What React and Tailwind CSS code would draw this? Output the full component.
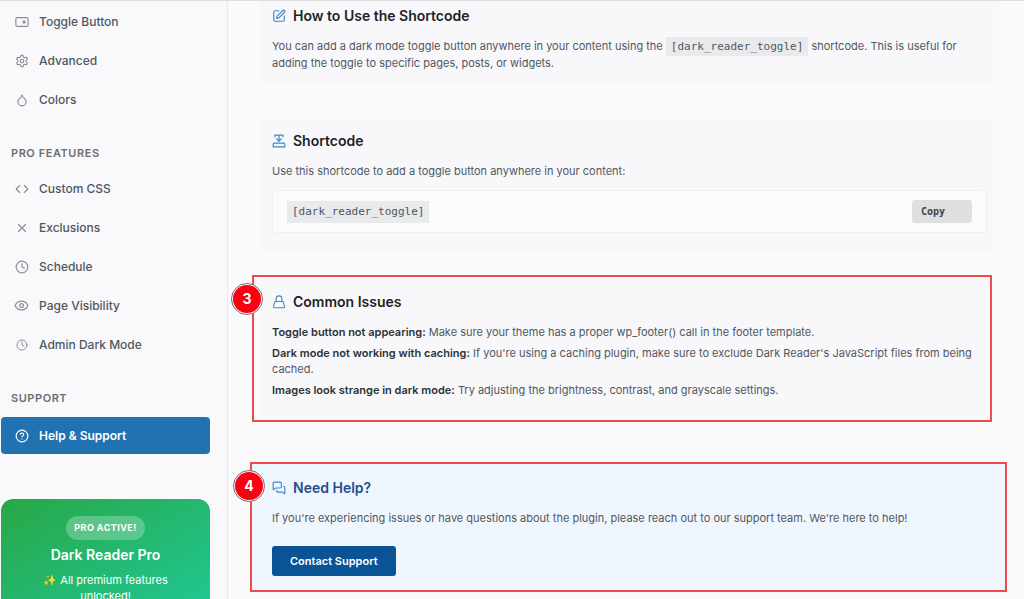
import React from "react";
import { Settings, Droplet, Code, X, Clock, Eye, CircleHelp, SquarePen, MessagesSquare } from "lucide-react";

function ToggleIcon() {
  return (
    <svg viewBox="0 0 24 24" className="h-[14px] w-[14px]" fill="none" stroke="currentColor" strokeWidth="2" aria-hidden="true">
      <rect x="1.500" y="4.500" width="21" height="15" rx="2.5" />
      <circle cx="15.5" cy="12" r="1.8" fill="currentColor" />
    </svg>
  );
}

function ShortcodeIcon() {
  return (
    <svg viewBox="0 0 24 24" className="h-[14px] w-[14px]" fill="none" stroke="currentColor" strokeWidth="2" strokeLinecap="round" strokeLinejoin="round" aria-hidden="true">
      <path d="M5 5V2h14v3M12 2v10M8 8.500l4 4 4-4" />
      <path d="M4 15.500h16a2 2 0 0 1 2 2V22H2v-4.500a2 2 0 0 1 2-2z" />
    </svg>
  );
}

function LockIcon() {
  return (
    <svg viewBox="0 0 24 24" className="h-[14px] w-[14px]" fill="none" stroke="currentColor" strokeWidth="1.800" strokeLinejoin="round" aria-hidden="true">
      <path d="M7 11V6.500a5 5 0 0 1 10 0V11" />
      <path d="M5 11h14l2.500 9a2 2 0 0 1-2 2h-15a2 2 0 0 1-2-2z" />
    </svg>
  );
}

const icon = "h-[14px] w-[14px]";

function NavItem({ children, label, active }) {
  return (
    <li>
      <a
        href="#"
        aria-current={active ? "page" : undefined}
        className={
          active
            ? "flex h-[37px] items-center gap-[10px] rounded bg-[#2271b1] px-[13px] text-xs font-semibold text-white"
            : "flex h-[37px] items-center gap-[10px] rounded px-[13px] text-xs font-medium text-[#50575e]"
        }
      >
        <span className={active ? "flex w-[15px] justify-center text-white" : "flex w-[15px] justify-center text-[#8b8f94]"}>{children}</span>
        {label}
      </a>
    </li>
  );
}

function NavHeading({ children }) {
  return <h2 className="px-[10px] text-[11px] leading-4 font-semibold tracking-wider text-[#6b6f74]">{children}</h2>;
}

function CardTitle({ icon, children, className = "text-[#1d2327]" }) {
  return (
    <h3 className={"flex items-center gap-[6px] text-sm leading-5 font-semibold " + className}>
      <span className="flex w-[15px] text-[#3f87c6]">{icon}</span>
      {children}
    </h3>
  );
}

function Shortcode() {
  return <code className="bg-[#e9eaeb] px-[5px] py-[3px] font-['DejaVu_Sans_Mono',monospace] text-[11px] text-[#50575e]">[dark_reader_toggle]</code>;
}

function Badge({ children, className }) {
  return (
    <span className={"absolute flex h-8 w-8 items-center justify-center rounded-full border border-[#7d6a6a] bg-white p-px text-sm font-bold text-white " + className}>
      <span className="flex h-full w-full items-center justify-center rounded-full bg-[#fb0012]">{children}</span>
    </span>
  );
}

export default function App() {
  return (
    <div className="flex h-screen overflow-hidden border-t border-[#dcdcde] bg-[#fafafb] font-['Inter',sans-serif]">
      <aside className="w-[228px] shrink-0 border-r border-[#e6ebf0] bg-[#f9f9fb] pr-[17px] pl-px">
        <nav className="flex flex-col pt-[2px]">
          <ul className="flex flex-col gap-[2px]">
            <NavItem label="Toggle Button"><ToggleIcon /></NavItem>
            <NavItem label="Advanced"><Settings className={icon} /></NavItem>
            <NavItem label="Colors"><Droplet className={icon} /></NavItem>
          </ul>
          <div className="pt-[27px] pb-[9px]"><NavHeading>PRO FEATURES</NavHeading></div>
          <ul className="flex flex-col gap-[2px]">
            <NavItem label="Custom CSS"><Code className={icon} /></NavItem>
            <NavItem label="Exclusions"><X className={icon} /></NavItem>
            <NavItem label="Schedule"><Clock className={icon} /></NavItem>
            <NavItem label="Page Visibility"><Eye className="h-[15px] w-[15px]" /></NavItem>
            <NavItem label="Admin Dark Mode"><Clock className="h-3 w-3" /></NavItem>
          </ul>
          <div className="pt-[27px] pb-[11px]"><NavHeading>SUPPORT</NavHeading></div>
          <ul>
            <NavItem label="Help &amp; Support" active><CircleHelp className={icon} /></NavItem>
          </ul>
        </nav>
        <section className="mt-[45px] flex flex-col items-center rounded-xl bg-linear-to-br from-[#28a745] to-[#20c997] px-8 pt-[17px] pb-5 text-center text-white">
          <span className="rounded-full bg-white/25 px-2 py-1 text-[9px] leading-4 font-bold tracking-wider">PRO ACTIVE!</span>
          <h3 className="mt-[5px] text-sm leading-5 font-semibold">Dark Reader Pro</h3>
          <p className="mt-[7px] text-[11px] leading-4">✨ All premium features unlocked!</p>
        </section>
      </aside>

      <main className="min-w-0 flex-1 pr-[25px] pl-8 text-[11px] leading-4 text-[#50575e]">
        <section className="bg-[#f8f8fb] px-3 pt-[5px] pb-[13px]">
          <CardTitle icon={<SquarePen className={icon} />}>How to Use the Shortcode</CardTitle>
          <p className="mt-3 leading-[17px]">
            You can add a dark mode toggle button anywhere in your content using the <Shortcode /> shortcode. This is useful for adding the toggle to specific pages, posts, or widgets.
          </p>
        </section>

        <section className="mt-[34px] bg-[#f8f8fb] px-3 pt-3 pb-[18px]">
          <CardTitle icon={<ShortcodeIcon />}>Shortcode</CardTitle>
          <p className="mt-3">Use this shortcode to add a toggle button anywhere in your content:</p>
          <div className="mt-[11px] flex h-[43px] items-center justify-between rounded border border-[#f0f0f1] bg-[#fbfbfb] px-[14px]">
            <Shortcode />
            <button type="button" className="h-[23px] w-[60px] rounded-[3px] bg-[#dfdfe0] pl-[9px] text-left font-['DejaVu_Sans_Mono',monospace] text-[10px] font-bold text-[#3c434a]">Copy</button>
          </div>
        </section>

        <section className="relative mt-6 bg-[#f8f8fb] px-3 pt-[17px] pb-6">
          <CardTitle icon={<LockIcon />}>Common Issues</CardTitle>
          <ul className="mt-3 flex flex-col gap-[5px]">
            <li><strong className="font-semibold text-[#2c3338]">Toggle button not appearing:</strong> Make sure your theme has a proper wp_footer() call in the footer template.</li>
            <li><strong className="font-semibold text-[#2c3338]">Dark mode not working with caching:</strong> If you're using a caching plugin, make sure to exclude Dark Reader's JavaScript files from being cached.</li>
            <li><strong className="font-semibold text-[#2c3338]">Images look strange in dark mode:</strong> Try adjusting the brightness, contrast, and grayscale settings.</li>
          </ul>
          <div className="pointer-events-none absolute inset-y-0 right-[7px] -left-2 border-2 border-[#ee4b50]" />
          <Badge className="top-2 -left-[29px]">3</Badge>
        </section>

        <section className="relative -mr-2 -ml-[10px] mt-[40px] border-2 border-[#ee4b50] bg-[#f0f6fd] px-5 pt-[14px] pb-[14px]">
          <CardTitle icon={<MessagesSquare className={icon} />} className="text-[#1d4f91]">Need Help?</CardTitle>
          <p className="mt-3">If you're experiencing issues or have questions about the plugin, please reach out to our support team. We're here to help!</p>
          <button type="button" className="mt-5 h-[30px] rounded-[3px] bg-[#0a5394] px-[18px] text-[11px] font-semibold text-white">Contact Support</button>
          <Badge className="top-[6px] -left-[19px]">4</Badge>
        </section>
      </main>
    </div>
  );
}
